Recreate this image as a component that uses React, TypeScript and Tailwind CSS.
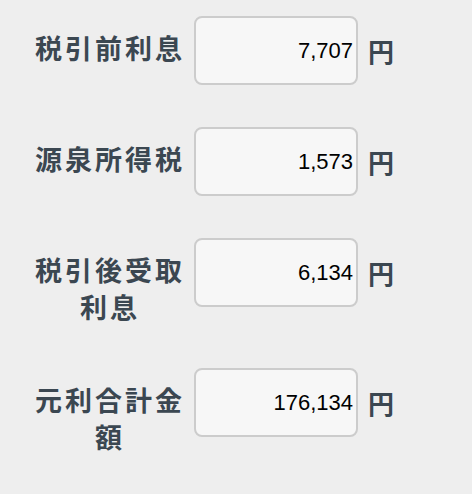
import React from "react";

const rows = [
  { label: "税引前利息", value: "7,707" },
  { label: "源泉所得税", value: "1,573" },
  { label: "税引後受取利息", value: "6,134" },
  { label: "元利合計金額", value: "176,134" },
];

export default function App() {
  return (
    <div
      className="w-[472px] h-[494px] bg-[#eeeeee] pt-[16px] flex flex-col gap-[42px]"
      style={{ fontFamily: '"Noto Sans CJK JP", "Noto Sans", sans-serif' }}
    >
      {rows.map((r) => (
        <div key={r.label} className="flex items-start">
          <div className="ml-[34px] w-[152px] pt-[14px] pb-[1px] text-center text-[27px] leading-[36.5px] font-bold tracking-[3px] text-[#3b4751]">
            {r.label}
          </div>
          <div className="ml-[8px] w-[164px] h-[69px] rounded-[8px] border-2 border-[#cccccc] bg-[#f7f7f7] flex items-center justify-end pr-[3px]">
            <span
              className="text-[22px] text-black"
              style={{ fontFamily: '"Liberation Sans", Arial, sans-serif' }}
            >
              {r.value}
            </span>
          </div>
          <div className="ml-[10px] h-[69px] flex items-center text-[26px] font-bold text-[#3b4751]">
            円
          </div>
        </div>
      ))}
    </div>
  );
}
